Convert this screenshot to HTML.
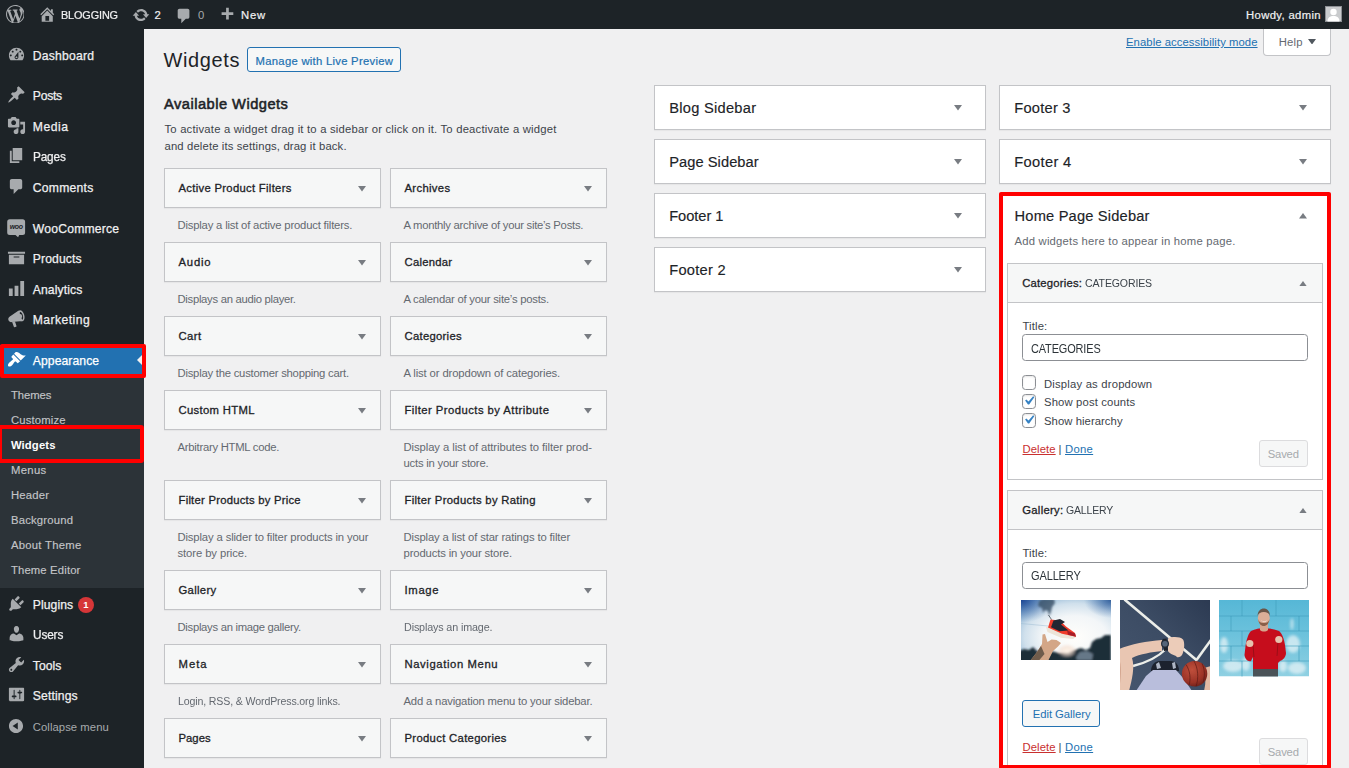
<!DOCTYPE html>
<html lang="en">
<head>
<meta charset="utf-8">
<title>Widgets ‹ BLOGGING — WordPress</title>
<style>
*{box-sizing:border-box;margin:0;padding:0}
html,body{width:1349px;height:768px;overflow:hidden;background:#f0f0f1;font-family:"Liberation Sans",sans-serif;color:#3c434a;font-size:11.7px}
body{position:relative}
.t{position:absolute;white-space:nowrap}
#bar{position:absolute;left:0;top:0;width:1349px;height:29px;background:#1d2327}
#menu{position:absolute;left:0;top:0;width:144px;height:768px;background:#1d2327}
#bar{z-index:2}
</style>
</head>
<body>
<div id="bar">
<svg style="position:absolute;left:5.8px;top:4.8px" width="18.6" height="18.6" viewBox="0 0 20 20"><path fill="#a7aaad" d="M20 10c0-5.51-4.49-10-10-10C4.48 0 0 4.49 0 10c0 5.52 4.48 10 10 10 5.51 0 10-4.48 10-10zM7.78 15.37L4.37 6.22c.55-.02 1.17-.08 1.17-.08.5-.06.44-1.13-.06-1.11 0 0-1.45.11-2.37.11-.18 0-.37 0-.58-.01C4.12 2.69 6.87 1.11 10 1.11c2.33 0 4.45.87 6.05 2.34-.68-.11-1.65.39-1.65 1.58 0 .74.45 1.36.9 2.1.35.61.55 1.36.55 2.46 0 1.49-1.4 5-1.4 5l-3.03-8.37c.54-.02.82-.17.82-.17.5-.05.44-1.25-.06-1.22 0 0-1.44.12-2.38.12-.87 0-2.33-.12-2.33-.12-.5-.03-.56 1.2-.06 1.22l.92.08 1.26 3.41zM17.41 10c.24-.64.74-1.87.43-4.25.7 1.29 1.05 2.71 1.05 4.25 0 3.29-1.73 6.24-4.4 7.78.97-2.59 1.94-5.2 2.92-7.78zM6.1 18.09C3.12 16.65 1.11 13.53 1.11 10c0-1.3.23-2.48.72-3.59C3.25 10.3 4.67 14.2 6.1 18.09zm4.03-6.63l2.58 6.98c-.86.29-1.76.45-2.71.45-.79 0-1.57-.11-2.29-.33.81-2.38 1.62-4.74 2.42-7.1z"/></svg>
<svg style="position:absolute;left:37.5px;top:4.6px" width="18.5" height="18.5" viewBox="0 0 20 20"><path fill="#a7aaad" d="M16 8.5l1.53 1.53-1.06 1.06L10 4.62l-6.47 6.47-1.06-1.06L10 2.5l4 4v-2h2v4zm-6-2.46l6 5.99V18H4v-5.97zM12 17v-5H8v5h4z"/></svg>
<div class="t" style="left:61.4px;top:8px;font-size:11.29px;line-height:15px;letter-spacing:-.15px;transform:scaleX(0.965);transform-origin:0 0;color:#f0f0f1;-webkit-text-stroke:.2px currentColor;">BLOGGING</div>
<svg style="position:absolute;left:131.5px;top:5.5px" width="18" height="18" viewBox="0 0 20 20"><path fill="#a7aaad" d="M10.2 3.28c3.53 0 6.43 2.61 6.92 6h2.08l-3.5 4-3.5-4h2.32c-.45-1.97-2.21-3.45-4.32-3.45-1.45 0-2.73.71-3.54 1.78L4.95 5.66C6.23 4.2 8.11 3.28 10.2 3.28zm-.4 13.44c-3.52 0-6.43-2.61-6.92-6H.8l3.5-4c1.17 1.33 2.33 2.67 3.5 4H5.48c.45 1.97 2.21 3.45 4.32 3.45 1.45 0 2.73-.71 3.54-1.78l1.71 1.95c-1.28 1.46-3.15 2.38-5.25 2.38z"/></svg>
<div class="t" style="left:154.6px;top:8px;font-size:11.29px;line-height:15px;color:#f0f0f1;-webkit-text-stroke:.2px currentColor;">2</div>
<svg style="position:absolute;left:174.5px;top:6.5px" width="18" height="18" viewBox="0 0 20 20"><path fill="#a7aaad" d="M5 2h9c1.1 0 2 .9 2 2v7c0 1.1-.9 2-2 2h-2l-5 5v-5H5c-1.1 0-2-.9-2-2V4c0-1.1.9-2 2-2z"/></svg>
<div class="t" style="left:198px;top:8px;font-size:11.29px;line-height:15px;color:#a7aaad;">0</div>
<svg style="position:absolute;left:218px;top:6px" width="18" height="18" viewBox="0 0 20 20"><path fill="#a7aaad" d="M17 7v3h-5v5H9v-5H4V7h5V2h3v5h5z"/></svg>
<div class="t" style="left:241px;top:8px;font-size:11.29px;line-height:15px;letter-spacing:0.79px;color:#f0f0f1;-webkit-text-stroke:.2px currentColor;">New</div>
<div class="t" style="left:1246px;top:8px;font-size:11.29px;line-height:15px;letter-spacing:0.36px;color:#f0f0f1;-webkit-text-stroke:.2px currentColor;">Howdy, admin</div>
<svg style="position:absolute;left:1325px;top:6px" width="17" height="16" viewBox="0 0 17 16"><rect width="17" height="16" fill="#c9cbcd"/><rect x=".5" y=".5" width="16" height="15" fill="none" stroke="#8c8f94"/><circle cx="8.5" cy="6" r="3.2" fill="#fff"/><path d="M2.5 15.500c0-4 2.500-5.500 6-5.500s6 1.500 6 5.500z" fill="#fff"/></svg>
</div>
<div id="menu">
<div style="position:absolute;left:0px;top:375.3px;width:144px;height:212.7px;background:#2c3338"></div>
<div style="position:absolute;left:0px;top:344.7px;width:144px;height:30.6px;background:#2271b1"></div>
<svg style="position:absolute;left:137px;top:353px" width="7" height="14" viewBox="0 0 7 14"><path d="M7 0v14L0 7z" fill="#f0f0f1"/></svg>
<svg style="position:absolute;left:6.7px;top:45.2px" width="19" height="19" viewBox="0 0 20 20"><path fill="#a7aaad" d="M3.76 16h12.48c1.1-1.37 1.76-3.11 1.76-5 0-4.42-3.58-8-8-8s-8 3.58-8 8c0 1.89.66 3.63 1.76 5zM10 4c.55 0 1 .45 1 1s-.45 1-1 1-1-.45-1-1 .45-1 1-1zM6 6c.55 0 1 .45 1 1s-.45 1-1 1-1-.45-1-1 .45-1 1-1zm8 0c.55 0 1 .45 1 1s-.45 1-1 1-1-.45-1-1 .45-1 1-1zm-5.37 5.55L12 7v6c0 1.1-.9 2-2 2s-2-.9-2-2c0-.57.24-1.08.63-1.45zM4 10c.55 0 1 .45 1 1s-.45 1-1 1-1-.45-1-1 .45-1 1-1zm12 0c.55 0 1 .45 1 1s-.45 1-1 1-1-.45-1-1 .45-1 1-1zm-5 3c0-.55-.45-1-1-1s-1 .45-1 1 .45 1 1 1 1-.45 1-1z"/></svg>
<div class="t" style="left:32.8px;top:48px;font-size:12.16px;line-height:16px;letter-spacing:0.21px;color:#f0f0f1;-webkit-text-stroke:.25px currentColor;">Dashboard</div>
<svg style="position:absolute;left:6.7px;top:85.2px" width="19" height="19" viewBox="0 0 20 20"><path fill="#a7aaad" d="M10.44 3.02l1.82-1.82 6.36 6.35-1.83 1.82c-1.05-.68-2.48-.57-3.41.36l-.75.75c-.92.93-1.04 2.35-.35 3.41l-1.83 1.82-2.41-2.41-2.8 2.79c-.42.42-3.38 2.71-3.8 2.29s1.86-3.39 2.28-3.81l2.79-2.79L4.1 9.36l1.83-1.82c1.05.69 2.48.57 3.4-.36l.75-.75c.93-.92 1.05-2.35.36-3.41z"/></svg>
<div class="t" style="left:32.8px;top:88px;font-size:12.16px;line-height:16px;letter-spacing:-0.27px;color:#f0f0f1;-webkit-text-stroke:.25px currentColor;">Posts</div>
<svg style="position:absolute;left:6.7px;top:116.2px" width="19" height="19" viewBox="0 0 20 20"><path fill="#a7aaad" d="M13 11V4c0-.55-.45-1-1-1h-1.670L9 1H5L3.670 3H2c-.55 0-1 .45-1 1v7c0 .55.45 1 1 1h10c.55 0 1-.45 1-1zM7 4.5c1.38 0 2.5 1.12 2.5 2.5S8.380 9.5 7 9.5 4.5 8.380 4.5 7 5.620 4.5 7 4.5zM14 6h5v10.500c0 1.38-1.120 2.500-2.500 2.500S14 17.880 14 16.500s1.120-2.500 2.500-2.500c.17 0 .34.02.5.050V9h-3V6zm-4 8.050V13h2v3.500c0 1.38-1.120 2.500-2.500 2.500S7 17.880 7 16.500 8.120 14 9.500 14c.17 0 .34.020.5.050z"/></svg>
<div class="t" style="left:32.8px;top:119px;font-size:12.16px;line-height:16px;letter-spacing:0.51px;color:#f0f0f1;-webkit-text-stroke:.25px currentColor;">Media</div>
<svg style="position:absolute;left:6.7px;top:146.2px" width="19" height="19" viewBox="0 0 20 20"><path fill="#a7aaad" d="M6 15V2h10v13H6zm-1 1h8v2H3V5h2v11z"/></svg>
<div class="t" style="left:32.8px;top:149px;font-size:12.16px;line-height:16px;letter-spacing:-.15px;transform:scaleX(0.969);transform-origin:0 0;color:#f0f0f1;-webkit-text-stroke:.25px currentColor;">Pages</div>
<svg style="position:absolute;left:6.7px;top:177.2px" width="19" height="19" viewBox="0 0 20 20"><path fill="#a7aaad" d="M5 2h9c1.1 0 2 .9 2 2v7c0 1.1-.9 2-2 2h-2l-5 5v-5H5c-1.1 0-2-.9-2-2V4c0-1.1.9-2 2-2z"/></svg>
<div class="t" style="left:32.8px;top:180px;font-size:12.16px;line-height:16px;letter-spacing:0.24px;color:#f0f0f1;-webkit-text-stroke:.25px currentColor;">Comments</div>
<svg style="position:absolute;left:7px;top:218.5px" width="19" height="19" viewBox="0 0 19 19"><path d="M2.700.200h12.900a2.500 2.500 0 0 1 2.500 2.500v10.700a2.500 2.500 0 0 1-2.500 2.500h-3.400l-1.100 2.400-2.600-2.400H2.700a2.500 2.500 0 0 1-2.500-2.500V2.700A2.500 2.500 0 0 1 2.700.2z" fill="#a7aaad"/><text x="9.200" y="10.400" font-size="7" font-weight="700" font-style="italic" text-anchor="middle" fill="#1d2327" font-family="Liberation Sans,sans-serif" letter-spacing="-.4">woo</text></svg>
<div class="t" style="left:32.8px;top:221px;font-size:12.16px;line-height:16px;letter-spacing:0.21px;color:#f0f0f1;-webkit-text-stroke:.25px currentColor;">WooCommerce</div>
<svg style="position:absolute;left:6.7px;top:248.2px" width="19" height="19" viewBox="0 0 20 20"><path fill="#a7aaad" d="M19 4v2H1V4h18zM2 7h16v10H2V7zm11 3V9H7v1h6z"/></svg>
<div class="t" style="left:32.8px;top:251px;font-size:12.16px;line-height:16px;letter-spacing:0.11px;color:#f0f0f1;-webkit-text-stroke:.25px currentColor;">Products</div>
<svg style="position:absolute;left:6.7px;top:279.2px" width="19" height="19" viewBox="0 0 20 20"><path fill="#a7aaad" d="M18 18V2h-4v16h4zm-6 0V7H8v11h4zm-6 0v-8H2v8h4z"/></svg>
<div class="t" style="left:32.8px;top:282px;font-size:12.16px;line-height:16px;letter-spacing:0.1px;color:#f0f0f1;-webkit-text-stroke:.25px currentColor;">Analytics</div>
<svg style="position:absolute;left:7px;top:309.2px" width="19" height="19" viewBox="0 0 20 20"><g fill="#a7aaad"><path d="M12.300 1.700L3 7.800c-1.300.800-2 2.300-1.500 3.800.5 1.600 2 2.400 3.500 2.200l11.400-1.300z"/><path d="M5.300 13.300l3-.5 1.700 5.200c.1.400-.1.700-.5.800l-1.500.4c-.4.100-.700-.1-.8-.5z"/><path fill-rule="evenodd" d="M13.100 1.500c1.900-.6 4.100 1.500 5 4.600.9 3.200.2 6.200-1.700 6.800-1.900.6-4.100-1.500-5-4.600-.9-3.200-.2-6.200 1.700-6.800zm.6 1.800c-1 .3-1.300 2.300-.7 4.500.6 2.200 2 3.800 3 3.500 1-.3 1.300-2.300.7-4.500-.6-2.200-2-3.800-3-3.500zm.5 2c.6-.2 1.300.6 1.600 1.700.3 1.100.1 2.100-.5 2.300-.6.2-1.300-.6-1.600-1.700-.3-1.100-.1-2.100.5-2.300z"/></g></svg>
<div class="t" style="left:32.8px;top:312px;font-size:12.16px;line-height:16px;letter-spacing:0.44px;color:#f0f0f1;-webkit-text-stroke:.25px currentColor;">Marketing</div>
<svg style="position:absolute;left:6.7px;top:350.2px" width="19" height="19" viewBox="0 0 20 20"><path fill="#fff" d="M14.48 11.06L7.41 3.99l1.5-1.5c.5-.56 2.3-.47 3.51.32 1.21.8 1.43 1.28 2.91 2.1 1.18.64 2.45 1.26 4.45.85zm-.71.71L6.7 4.7 4.93 6.47c-.39.39-.39 1.02 0 1.41l1.060 1.060c.39.39.39 1.030 0 1.420-.6.6-1.430 1.110-2.210 1.690-.35.26-.7.530-1.010.84C1.430 14.230.4 16.080 1.4 17.070c.99 1 2.840-.030 4.180-1.360.31-.31.580-.66.850-1.020.57-.78 1.080-1.610 1.690-2.210.39-.39 1.020-.39 1.410 0l1.060 1.060c.39.39 1.020.39 1.410 0z"/></svg>
<div class="t" style="left:32.8px;top:353px;font-size:12.16px;line-height:16px;letter-spacing:0.08px;color:#fff;-webkit-text-stroke:.25px currentColor;">Appearance</div>
<svg style="position:absolute;left:6.7px;top:594.2px" width="19" height="19" viewBox="0 0 20 20"><path fill="#a7aaad" d="M13.11 4.36L9.87 7.6 8 5.73l3.240-3.240c.35-.34 1.050-.2 1.560.32.52.51.66 1.210.31 1.550zm-8 1.770l.91-1.120 9.010 9.010-1.190.84c-.71.71-2.630 1.160-3.820 1.160H6.140L4.900 17.260c-.59.59-1.540.59-2.120 0-.59-.58-.59-1.530 0-2.120l1.240-1.240v-3.880c0-1.130.4-3.190 1.090-3.890zm7.260 3.970l3.240-3.240c.34-.35 1.040-.21 1.550.31.52.51.66 1.210.31 1.550l-3.240 3.250z"/></svg>
<div class="t" style="left:32.8px;top:597px;font-size:12.16px;line-height:16px;letter-spacing:0.08px;color:#f0f0f1;-webkit-text-stroke:.25px currentColor;">Plugins</div>
<svg style="position:absolute;left:6.7px;top:624.2px" width="19" height="19" viewBox="0 0 20 20"><path fill="#a7aaad" d="M10 9.25c-2.27 0-2.73-3.440-2.730-3.440C7 4.020 7.820 2 9.970 2c2.160 0 2.980 2.020 2.710 3.810 0 0-.41 3.440-2.680 3.440zm0 2.570L12.720 10c2.390 0 4.520 2.330 4.520 4.530v2.490s-3.650 1.130-7.240 1.130c-3.650 0-7.240-1.130-7.240-1.130v-2.490c0-2.250 1.940-4.480 4.470-4.480z"/></svg>
<div class="t" style="left:32.8px;top:627px;font-size:12.16px;line-height:16px;letter-spacing:-.15px;transform:scaleX(0.973);transform-origin:0 0;color:#f0f0f1;-webkit-text-stroke:.25px currentColor;">Users</div>
<svg style="position:absolute;left:6.7px;top:655.2px" width="19" height="19" viewBox="0 0 20 20"><path fill="#a7aaad" d="M16.68 9.77c-1.34 1.34-3.3 1.67-4.95.99l-5.410 6.520c-.99.99-2.590.99-3.580 0s-.99-2.590 0-3.570l6.520-5.420c-.68-1.650-.35-3.610.99-4.950 1.280-1.280 3.120-1.620 4.720-1.060l-2.890 2.890 2.820 2.820 2.860-2.870c.53 1.580.18 3.390-1.080 4.650zM3.810 16.210c.4.39 1.040.39 1.430 0 .4-.4.4-1.040 0-1.430-.39-.4-1.030-.4-1.430 0-.39.39-.39 1.030 0 1.430z"/></svg>
<div class="t" style="left:32.8px;top:658px;font-size:12.16px;line-height:16px;letter-spacing:0.04px;color:#f0f0f1;-webkit-text-stroke:.25px currentColor;">Tools</div>
<svg style="position:absolute;left:6.7px;top:685.2px" width="19" height="19" viewBox="0 0 20 20"><path fill="#a7aaad" d="M18 16V4c0-.55-.45-1-1-1H3c-.55 0-1 .45-1 1v12c0 .55.45 1 1 1h14c.55 0 1-.45 1-1zM8 11h1c.55 0 1 .45 1 1s-.45 1-1 1H8v1.500c0 .28-.22.5-.5.5s-.5-.22-.5-.5V13H6c-.55 0-1-.45-1-1s.45-1 1-1h1V5.500c0-.28.220-.5.5-.5s.5.220.5.5V11zm5-2h-1c-.55 0-1-.45-1-1s.45-1 1-1h1V5.500c0-.28.220-.5.5-.5s.5.220.5.5V7h1c.55 0 1 .45 1 1s-.45 1-1 1h-1v5.500c0 .28-.22.5-.5.5s-.5-.22-.5-.5V9z"/></svg>
<div class="t" style="left:32.8px;top:688px;font-size:12.16px;line-height:16px;letter-spacing:0.13px;color:#f0f0f1;-webkit-text-stroke:.25px currentColor;">Settings</div>
<div class="t" style="left:10.9px;top:388px;font-size:11.29px;line-height:15px;letter-spacing:-0.06px;color:#c3c4c7;-webkit-text-stroke:.15px currentColor;">Themes</div>
<div class="t" style="left:10.9px;top:413px;font-size:11.29px;line-height:15px;letter-spacing:0.17px;color:#c3c4c7;-webkit-text-stroke:.15px currentColor;">Customize</div>
<div class="t" style="left:10.9px;top:438px;font-size:11.29px;line-height:15px;letter-spacing:0.13px;color:#fff;font-weight:700;">Widgets</div>
<div class="t" style="left:10.9px;top:463px;font-size:11.29px;line-height:15px;letter-spacing:0.37px;color:#c3c4c7;-webkit-text-stroke:.15px currentColor;">Menus</div>
<div class="t" style="left:10.9px;top:488px;font-size:11.29px;line-height:15px;letter-spacing:0.23px;color:#c3c4c7;-webkit-text-stroke:.15px currentColor;">Header</div>
<div class="t" style="left:10.9px;top:513px;font-size:11.29px;line-height:15px;letter-spacing:0.22px;color:#c3c4c7;-webkit-text-stroke:.15px currentColor;">Background</div>
<div class="t" style="left:10.9px;top:538px;font-size:11.29px;line-height:15px;letter-spacing:0.28px;color:#c3c4c7;-webkit-text-stroke:.15px currentColor;">About Theme</div>
<div class="t" style="left:10.9px;top:563px;font-size:11.29px;line-height:15px;letter-spacing:0.16px;color:#c3c4c7;-webkit-text-stroke:.15px currentColor;">Theme Editor</div>
<div style="position:absolute;left:78px;top:597px;width:16px;height:16px;background:#d63638;border-radius:8px;color:#fff;font-size:9.5px;font-weight:700;text-align:center;line-height:16px">1</div>
<svg style="position:absolute;left:7px;top:717px" width="18" height="18" viewBox="0 0 20 20"><path fill="#a7aaad" d="M10 2.16c4.33 0 7.840 3.510 7.840 7.840s-3.510 7.840-7.840 7.840S2.160 14.330 2.160 10 5.670 2.160 10 2.160zm2 11.720V6.120L6.180 9.970z"/></svg>
<div class="t" style="left:32.8px;top:720px;font-size:11.29px;line-height:15px;letter-spacing:0.06px;color:#a7aaad;">Collapse menu</div>
</div>
<div style="position:absolute;left:0px;top:344px;width:146px;height:34px;border:4px solid #ff0000;border-radius:2px;z-index:9"></div>
<div style="position:absolute;left:-2px;top:425px;width:146px;height:38px;border:4px solid #ff0000;border-radius:3px;z-index:9"></div>
<a class="t" style="left:1126px;top:35px;font-size:11.29px;line-height:15px;letter-spacing:0.07px;color:#2271b1;text-decoration:underline;">Enable accessibility mode</a>
<div style="position:absolute;left:1263px;top:28px;width:68px;height:27.5px;background:#fff;border:1px solid #c3c4c7;border-top:none;border-radius:0 0 4px 4px"></div>
<div class="t" style="left:1278.7px;top:35px;font-size:11.29px;line-height:15px;letter-spacing:0.22px;color:#646970;">Help</div>
<svg style="position:absolute;left:1307.5px;top:38.7px" width="8" height="5.5" viewBox="0 0 10 6" preserveAspectRatio="none"><path d="M0 0h10L5 6z" fill="#50575e"/></svg>
<h1 class="t" style="left:163.5px;top:47px;font-size:19.98px;line-height:26px;letter-spacing:0.64px;color:#1d2327;font-weight:400;">Widgets</h1>
<div style="position:absolute;left:247px;top:47px;width:154px;height:25px;background:#f6f7f7;border:1px solid #2271b1;border-radius:3px"></div>
<a class="t" style="left:255.6px;top:54px;font-size:11.29px;line-height:15px;letter-spacing:0.27px;color:#2271b1;-webkit-text-stroke:.2px #2271b1;">Manage with Live Preview</a>
<h2 class="t" style="left:164px;top:95px;font-size:14.67px;line-height:19px;letter-spacing:0.48px;color:#1d2327;font-weight:400;-webkit-text-stroke:.55px #1d2327;">Available Widgets</h2>
<p class="t" style="left:164.5px;top:122px;font-size:11.29px;line-height:15px;letter-spacing:0.2px;color:#3c434a;">To activate a widget drag it to a sidebar or click on it. To deactivate a widget</p>
<p class="t" style="left:164.5px;top:139px;font-size:11.29px;line-height:15px;letter-spacing:0.14px;color:#3c434a;">and delete its settings, drag it back.</p>
<div style="position:absolute;left:164px;top:168.3px;width:217px;height:40px;background:#f6f7f7;border:1px solid #c3c4c7;box-shadow:0 1px 1px rgba(0,0,0,.04)"></div>
<h3 class="t" style="left:178.5px;top:181px;font-size:11.29px;line-height:15px;letter-spacing:0.3px;color:#1d2327;-webkit-text-stroke:.3px #1d2327;font-weight:400;">Active Product Filters</h3>
<svg style="position:absolute;left:357.5px;top:186px" width="8" height="5.5" viewBox="0 0 10 6" preserveAspectRatio="none"><path d="M0 0h10L5 6z" fill="#787c82"/></svg>
<p class="t" style="left:177.5px;top:218px;font-size:11.29px;line-height:15px;letter-spacing:-0.19px;color:#646970;">Display a list of active product filters.</p>
<div style="position:absolute;left:390px;top:168.3px;width:217px;height:40px;background:#f6f7f7;border:1px solid #c3c4c7;box-shadow:0 1px 1px rgba(0,0,0,.04)"></div>
<h3 class="t" style="left:404.5px;top:181px;font-size:11.29px;line-height:15px;letter-spacing:0.33px;color:#1d2327;-webkit-text-stroke:.3px #1d2327;font-weight:400;">Archives</h3>
<svg style="position:absolute;left:583.5px;top:186px" width="8" height="5.5" viewBox="0 0 10 6" preserveAspectRatio="none"><path d="M0 0h10L5 6z" fill="#787c82"/></svg>
<p class="t" style="left:403.5px;top:218px;font-size:11.29px;line-height:15px;letter-spacing:-0.26px;color:#646970;">A monthly archive of your site’s Posts.</p>
<div style="position:absolute;left:164px;top:242.3px;width:217px;height:40px;background:#f6f7f7;border:1px solid #c3c4c7;box-shadow:0 1px 1px rgba(0,0,0,.04)"></div>
<h3 class="t" style="left:178.5px;top:255px;font-size:11.29px;line-height:15px;letter-spacing:0.8px;color:#1d2327;-webkit-text-stroke:.3px #1d2327;font-weight:400;">Audio</h3>
<svg style="position:absolute;left:357.5px;top:260px" width="8" height="5.5" viewBox="0 0 10 6" preserveAspectRatio="none"><path d="M0 0h10L5 6z" fill="#787c82"/></svg>
<p class="t" style="left:177.5px;top:292px;font-size:11.29px;line-height:15px;letter-spacing:-0.29px;color:#646970;">Displays an audio player.</p>
<div style="position:absolute;left:390px;top:242.3px;width:217px;height:40px;background:#f6f7f7;border:1px solid #c3c4c7;box-shadow:0 1px 1px rgba(0,0,0,.04)"></div>
<h3 class="t" style="left:404.5px;top:255px;font-size:11.29px;line-height:15px;letter-spacing:0.25px;color:#1d2327;-webkit-text-stroke:.3px #1d2327;font-weight:400;">Calendar</h3>
<svg style="position:absolute;left:583.5px;top:260px" width="8" height="5.5" viewBox="0 0 10 6" preserveAspectRatio="none"><path d="M0 0h10L5 6z" fill="#787c82"/></svg>
<p class="t" style="left:403.5px;top:292px;font-size:11.29px;line-height:15px;letter-spacing:-0.23px;color:#646970;">A calendar of your site’s posts.</p>
<div style="position:absolute;left:164px;top:316.3px;width:217px;height:40px;background:#f6f7f7;border:1px solid #c3c4c7;box-shadow:0 1px 1px rgba(0,0,0,.04)"></div>
<h3 class="t" style="left:178.5px;top:329px;font-size:11.29px;line-height:15px;letter-spacing:0.42px;color:#1d2327;-webkit-text-stroke:.3px #1d2327;font-weight:400;">Cart</h3>
<svg style="position:absolute;left:357.5px;top:334px" width="8" height="5.5" viewBox="0 0 10 6" preserveAspectRatio="none"><path d="M0 0h10L5 6z" fill="#787c82"/></svg>
<p class="t" style="left:177.5px;top:366px;font-size:11.29px;line-height:15px;letter-spacing:-0.23px;color:#646970;">Display the customer shopping cart.</p>
<div style="position:absolute;left:390px;top:316.3px;width:217px;height:40px;background:#f6f7f7;border:1px solid #c3c4c7;box-shadow:0 1px 1px rgba(0,0,0,.04)"></div>
<h3 class="t" style="left:404.5px;top:329px;font-size:11.29px;line-height:15px;letter-spacing:0.28px;color:#1d2327;-webkit-text-stroke:.3px #1d2327;font-weight:400;">Categories</h3>
<svg style="position:absolute;left:583.5px;top:334px" width="8" height="5.5" viewBox="0 0 10 6" preserveAspectRatio="none"><path d="M0 0h10L5 6z" fill="#787c82"/></svg>
<p class="t" style="left:403.5px;top:366px;font-size:11.29px;line-height:15px;letter-spacing:-0.12px;color:#646970;">A list or dropdown of categories.</p>
<div style="position:absolute;left:164px;top:390.3px;width:217px;height:40px;background:#f6f7f7;border:1px solid #c3c4c7;box-shadow:0 1px 1px rgba(0,0,0,.04)"></div>
<h3 class="t" style="left:178.5px;top:403px;font-size:11.29px;line-height:15px;letter-spacing:0.33px;color:#1d2327;-webkit-text-stroke:.3px #1d2327;font-weight:400;">Custom HTML</h3>
<svg style="position:absolute;left:357.5px;top:408px" width="8" height="5.5" viewBox="0 0 10 6" preserveAspectRatio="none"><path d="M0 0h10L5 6z" fill="#787c82"/></svg>
<p class="t" style="left:177.5px;top:440px;font-size:11.29px;line-height:15px;letter-spacing:-0.26px;color:#646970;">Arbitrary HTML code.</p>
<div style="position:absolute;left:390px;top:390.3px;width:217px;height:40px;background:#f6f7f7;border:1px solid #c3c4c7;box-shadow:0 1px 1px rgba(0,0,0,.04)"></div>
<h3 class="t" style="left:404.5px;top:403px;font-size:11.29px;line-height:15px;letter-spacing:0.45px;color:#1d2327;-webkit-text-stroke:.3px #1d2327;font-weight:400;">Filter Products by Attribute</h3>
<svg style="position:absolute;left:583.5px;top:408px" width="8" height="5.5" viewBox="0 0 10 6" preserveAspectRatio="none"><path d="M0 0h10L5 6z" fill="#787c82"/></svg>
<p class="t" style="left:403.5px;top:440px;font-size:11.29px;line-height:15px;letter-spacing:-0.08px;color:#646970;">Display a list of attributes to filter prod-</p>
<p class="t" style="left:403.5px;top:456px;font-size:11.29px;line-height:15px;letter-spacing:-0.22px;color:#646970;">ucts in your store.</p>
<div style="position:absolute;left:164px;top:480.3px;width:217px;height:40px;background:#f6f7f7;border:1px solid #c3c4c7;box-shadow:0 1px 1px rgba(0,0,0,.04)"></div>
<h3 class="t" style="left:178.5px;top:493px;font-size:11.29px;line-height:15px;letter-spacing:0.24px;color:#1d2327;-webkit-text-stroke:.3px #1d2327;font-weight:400;">Filter Products by Price</h3>
<svg style="position:absolute;left:357.5px;top:498px" width="8" height="5.5" viewBox="0 0 10 6" preserveAspectRatio="none"><path d="M0 0h10L5 6z" fill="#787c82"/></svg>
<p class="t" style="left:177.5px;top:530px;font-size:11.29px;line-height:15px;letter-spacing:-0.14px;color:#646970;">Display a slider to filter products in your</p>
<p class="t" style="left:177.5px;top:546px;font-size:11.29px;line-height:15px;letter-spacing:-0.09px;color:#646970;">store by price.</p>
<div style="position:absolute;left:390px;top:480.3px;width:217px;height:40px;background:#f6f7f7;border:1px solid #c3c4c7;box-shadow:0 1px 1px rgba(0,0,0,.04)"></div>
<h3 class="t" style="left:404.5px;top:493px;font-size:11.29px;line-height:15px;letter-spacing:0.31px;color:#1d2327;-webkit-text-stroke:.3px #1d2327;font-weight:400;">Filter Products by Rating</h3>
<svg style="position:absolute;left:583.5px;top:498px" width="8" height="5.5" viewBox="0 0 10 6" preserveAspectRatio="none"><path d="M0 0h10L5 6z" fill="#787c82"/></svg>
<p class="t" style="left:403.5px;top:530px;font-size:11.29px;line-height:15px;letter-spacing:-0.13px;color:#646970;">Display a list of star ratings to filter</p>
<p class="t" style="left:403.5px;top:546px;font-size:11.29px;line-height:15px;letter-spacing:-0.14px;color:#646970;">products in your store.</p>
<div style="position:absolute;left:164px;top:570.3px;width:217px;height:40px;background:#f6f7f7;border:1px solid #c3c4c7;box-shadow:0 1px 1px rgba(0,0,0,.04)"></div>
<h3 class="t" style="left:178.5px;top:583px;font-size:11.29px;line-height:15px;letter-spacing:0.31px;color:#1d2327;-webkit-text-stroke:.3px #1d2327;font-weight:400;">Gallery</h3>
<svg style="position:absolute;left:357.5px;top:588px" width="8" height="5.5" viewBox="0 0 10 6" preserveAspectRatio="none"><path d="M0 0h10L5 6z" fill="#787c82"/></svg>
<p class="t" style="left:177.5px;top:620px;font-size:11.29px;line-height:15px;letter-spacing:-0.29px;color:#646970;">Displays an image gallery.</p>
<div style="position:absolute;left:390px;top:570.3px;width:217px;height:40px;background:#f6f7f7;border:1px solid #c3c4c7;box-shadow:0 1px 1px rgba(0,0,0,.04)"></div>
<h3 class="t" style="left:404.5px;top:583px;font-size:11.29px;line-height:15px;letter-spacing:0.68px;color:#1d2327;-webkit-text-stroke:.3px #1d2327;font-weight:400;">Image</h3>
<svg style="position:absolute;left:583.5px;top:588px" width="8" height="5.5" viewBox="0 0 10 6" preserveAspectRatio="none"><path d="M0 0h10L5 6z" fill="#787c82"/></svg>
<p class="t" style="left:403.5px;top:620px;font-size:11.29px;line-height:15px;letter-spacing:-.15px;transform:scaleX(0.954);transform-origin:0 0;color:#646970;">Displays an image.</p>
<div style="position:absolute;left:164px;top:644.3px;width:217px;height:40px;background:#f6f7f7;border:1px solid #c3c4c7;box-shadow:0 1px 1px rgba(0,0,0,.04)"></div>
<h3 class="t" style="left:178.5px;top:657px;font-size:11.29px;line-height:15px;letter-spacing:0.99px;color:#1d2327;-webkit-text-stroke:.3px #1d2327;font-weight:400;">Meta</h3>
<svg style="position:absolute;left:357.5px;top:662px" width="8" height="5.5" viewBox="0 0 10 6" preserveAspectRatio="none"><path d="M0 0h10L5 6z" fill="#787c82"/></svg>
<p class="t" style="left:177.5px;top:694px;font-size:11.29px;line-height:15px;letter-spacing:-.15px;transform:scaleX(0.94);transform-origin:0 0;color:#646970;">Login, RSS, &amp; WordPress.org links.</p>
<div style="position:absolute;left:390px;top:644.3px;width:217px;height:40px;background:#f6f7f7;border:1px solid #c3c4c7;box-shadow:0 1px 1px rgba(0,0,0,.04)"></div>
<h3 class="t" style="left:404.5px;top:657px;font-size:11.29px;line-height:15px;letter-spacing:0.6px;color:#1d2327;-webkit-text-stroke:.3px #1d2327;font-weight:400;">Navigation Menu</h3>
<svg style="position:absolute;left:583.5px;top:662px" width="8" height="5.5" viewBox="0 0 10 6" preserveAspectRatio="none"><path d="M0 0h10L5 6z" fill="#787c82"/></svg>
<p class="t" style="left:403.5px;top:694px;font-size:11.29px;line-height:15px;letter-spacing:-0.18px;color:#646970;">Add a navigation menu to your sidebar.</p>
<div style="position:absolute;left:164px;top:718.3px;width:217px;height:40px;background:#f6f7f7;border:1px solid #c3c4c7;box-shadow:0 1px 1px rgba(0,0,0,.04)"></div>
<h3 class="t" style="left:178.5px;top:731px;font-size:11.29px;line-height:15px;letter-spacing:0.02px;color:#1d2327;-webkit-text-stroke:.3px #1d2327;font-weight:400;">Pages</h3>
<svg style="position:absolute;left:357.5px;top:736px" width="8" height="5.5" viewBox="0 0 10 6" preserveAspectRatio="none"><path d="M0 0h10L5 6z" fill="#787c82"/></svg>
<div style="position:absolute;left:390px;top:718.3px;width:217px;height:40px;background:#f6f7f7;border:1px solid #c3c4c7;box-shadow:0 1px 1px rgba(0,0,0,.04)"></div>
<h3 class="t" style="left:404.5px;top:731px;font-size:11.29px;line-height:15px;letter-spacing:0.32px;color:#1d2327;-webkit-text-stroke:.3px #1d2327;font-weight:400;">Product Categories</h3>
<svg style="position:absolute;left:583.5px;top:736px" width="8" height="5.5" viewBox="0 0 10 6" preserveAspectRatio="none"><path d="M0 0h10L5 6z" fill="#787c82"/></svg>
<div style="position:absolute;left:654px;top:85px;width:332px;height:45px;background:#fff;border:1px solid #c3c4c7;box-shadow:0 1px 1px rgba(0,0,0,.04)"></div>
<h2 class="t" style="left:669.2px;top:99px;font-size:14.67px;line-height:19px;letter-spacing:0.27px;color:#1d2327;font-weight:400;-webkit-text-stroke:.15px #1d2327;">Blog Sidebar</h2>
<svg style="position:absolute;left:954px;top:105px" width="8" height="5.5" viewBox="0 0 10 6" preserveAspectRatio="none"><path d="M0 0h10L5 6z" fill="#787c82"/></svg>
<div style="position:absolute;left:654px;top:139px;width:332px;height:45px;background:#fff;border:1px solid #c3c4c7;box-shadow:0 1px 1px rgba(0,0,0,.04)"></div>
<h2 class="t" style="left:669.2px;top:153px;font-size:14.67px;line-height:19px;letter-spacing:0.06px;color:#1d2327;font-weight:400;-webkit-text-stroke:.15px #1d2327;">Page Sidebar</h2>
<svg style="position:absolute;left:954px;top:159px" width="8" height="5.5" viewBox="0 0 10 6" preserveAspectRatio="none"><path d="M0 0h10L5 6z" fill="#787c82"/></svg>
<div style="position:absolute;left:654px;top:193px;width:332px;height:45px;background:#fff;border:1px solid #c3c4c7;box-shadow:0 1px 1px rgba(0,0,0,.04)"></div>
<h2 class="t" style="left:669.2px;top:207px;font-size:14.67px;line-height:19px;letter-spacing:-0.04px;color:#1d2327;font-weight:400;-webkit-text-stroke:.15px #1d2327;">Footer 1</h2>
<svg style="position:absolute;left:954px;top:213px" width="8" height="5.5" viewBox="0 0 10 6" preserveAspectRatio="none"><path d="M0 0h10L5 6z" fill="#787c82"/></svg>
<div style="position:absolute;left:654px;top:247px;width:332px;height:45px;background:#fff;border:1px solid #c3c4c7;box-shadow:0 1px 1px rgba(0,0,0,.04)"></div>
<h2 class="t" style="left:669.2px;top:261px;font-size:14.67px;line-height:19px;letter-spacing:0.26px;color:#1d2327;font-weight:400;-webkit-text-stroke:.15px #1d2327;">Footer 2</h2>
<svg style="position:absolute;left:954px;top:267px" width="8" height="5.5" viewBox="0 0 10 6" preserveAspectRatio="none"><path d="M0 0h10L5 6z" fill="#787c82"/></svg>
<div style="position:absolute;left:999px;top:85px;width:332px;height:45px;background:#fff;border:1px solid #c3c4c7;box-shadow:0 1px 1px rgba(0,0,0,.04)"></div>
<h2 class="t" style="left:1014.2px;top:99px;font-size:14.67px;line-height:19px;letter-spacing:0.25px;color:#1d2327;font-weight:400;-webkit-text-stroke:.15px #1d2327;">Footer 3</h2>
<svg style="position:absolute;left:1299px;top:105px" width="8" height="5.5" viewBox="0 0 10 6" preserveAspectRatio="none"><path d="M0 0h10L5 6z" fill="#787c82"/></svg>
<div style="position:absolute;left:999px;top:139px;width:332px;height:45px;background:#fff;border:1px solid #c3c4c7;box-shadow:0 1px 1px rgba(0,0,0,.04)"></div>
<h2 class="t" style="left:1014.2px;top:153px;font-size:14.67px;line-height:19px;letter-spacing:0.35px;color:#1d2327;font-weight:400;-webkit-text-stroke:.15px #1d2327;">Footer 4</h2>
<svg style="position:absolute;left:1299px;top:159px" width="8" height="5.5" viewBox="0 0 10 6" preserveAspectRatio="none"><path d="M0 0h10L5 6z" fill="#787c82"/></svg>
<div style="position:absolute;left:999px;top:193px;width:332px;height:600px;background:#fff;border:1px solid #c3c4c7"></div>
<h2 class="t" style="left:1014.6px;top:207px;font-size:14.67px;line-height:19px;letter-spacing:0.18px;color:#1d2327;font-weight:400;-webkit-text-stroke:.15px #1d2327;">Home Page Sidebar</h2>
<svg style="position:absolute;left:1299px;top:213px" width="8" height="5.5" viewBox="0 0 10 6" preserveAspectRatio="none"><path d="M0 6h10L5 0z" fill="#787c82"/></svg>
<p class="t" style="left:1014.5px;top:234px;font-size:11.29px;line-height:15px;letter-spacing:0.21px;color:#646970;">Add widgets here to appear in home page.</p>
<div style="position:absolute;left:1007px;top:263px;width:316px;height:40px;background:#f6f7f7;border:1px solid #c3c4c7;box-shadow:0 1px 1px rgba(0,0,0,.04)"></div>
<h3 class="t" style="left:1022.2px;top:276px;font-size:11.29px;line-height:15px;letter-spacing:0.21px;color:#1d2327;-webkit-text-stroke:.3px #1d2327;font-weight:400;">Categories:</h3>
<div class="t" style="left:1084.6px;top:276px;font-size:11.29px;line-height:15px;letter-spacing:-.15px;transform:scaleX(0.935);transform-origin:0 0;color:#3c434a;">CATEGORIES</div>
<svg style="position:absolute;left:1299px;top:280.5px" width="8" height="5.5" viewBox="0 0 10 6" preserveAspectRatio="none"><path d="M0 6h10L5 0z" fill="#787c82"/></svg>
<div style="position:absolute;left:1007px;top:303px;width:316px;height:177px;background:#fff;border:1px solid #c3c4c7;border-top:none"></div>
<div class="t" style="left:1022.5px;top:319px;font-size:11.29px;line-height:15px;letter-spacing:0.13px;color:#3c434a;">Title:</div>
<div style="position:absolute;left:1022px;top:334px;width:286px;height:26.5px;background:#fff;border:1px solid #8c8f94;border-radius:3.500px"></div>
<div class="t" style="left:1030.8px;top:341px;font-size:12.16px;line-height:16px;letter-spacing:-.15px;transform:scaleX(0.9);transform-origin:0 0;color:#2c3338;">CATEGORIES</div>
<div style="position:absolute;left:1022px;top:375.3px;width:14px;height:14.5px;background:#fff;border:1px solid #8c8f94;border-radius:3.5px;box-shadow:inset 0 1px 2px rgba(0,0,0,.1)"></div>
<div class="t" style="left:1044px;top:377px;font-size:11.29px;line-height:15px;letter-spacing:0.19px;color:#3c434a;">Display as dropdown</div>
<div style="position:absolute;left:1022px;top:394.25px;width:14px;height:14.5px;background:#fff;border:1px solid #8c8f94;border-radius:3.5px;box-shadow:inset 0 1px 2px rgba(0,0,0,.1)"></div>
<svg style="position:absolute;left:1019.7px;top:392.42px" width="17.7" height="17.7" viewBox="0 0 20 20"><path d="M14.830 4.890l1.340.94-5.810 8.380H9.020L5.780 9.670l1.340-1.250 2.570 2.400z" fill="#3582c4"/></svg>
<div class="t" style="left:1044px;top:395px;font-size:11.29px;line-height:15px;letter-spacing:0.14px;color:#3c434a;">Show post counts</div>
<div style="position:absolute;left:1022px;top:413.25px;width:14px;height:14.5px;background:#fff;border:1px solid #8c8f94;border-radius:3.5px;box-shadow:inset 0 1px 2px rgba(0,0,0,.1)"></div>
<svg style="position:absolute;left:1019.7px;top:411.42px" width="17.7" height="17.7" viewBox="0 0 20 20"><path d="M14.830 4.890l1.340.94-5.810 8.380H9.020L5.780 9.670l1.340-1.250 2.570 2.400z" fill="#3582c4"/></svg>
<div class="t" style="left:1044px;top:414px;font-size:11.29px;line-height:15px;letter-spacing:0.06px;color:#3c434a;">Show hierarchy</div>
<a class="t" style="left:1022.5px;top:442px;font-size:11.29px;line-height:15px;letter-spacing:0.09px;color:#c9302f;text-decoration:underline;">Delete</a>
<div class="t" style="left:1058.5px;top:442px;font-size:11.29px;line-height:15px;color:#3c434a;">|</div>
<a class="t" style="left:1065px;top:442px;font-size:11.29px;line-height:15px;letter-spacing:0.29px;color:#2271b1;text-decoration:underline;">Done</a>
<div style="position:absolute;left:1258.5px;top:440px;width:49.5px;height:26.5px;background:#f6f7f7;border:1px solid #dcdcde;border-radius:3px"></div>
<div class="t" style="left:1267.7px;top:447px;font-size:11.29px;line-height:15px;letter-spacing:-0.18px;color:#a7aaad;">Saved</div>
<div style="position:absolute;left:1007px;top:490px;width:316px;height:40px;background:#f6f7f7;border:1px solid #c3c4c7;box-shadow:0 1px 1px rgba(0,0,0,.04)"></div>
<h3 class="t" style="left:1022.2px;top:503px;font-size:11.29px;line-height:15px;letter-spacing:0.3px;color:#1d2327;-webkit-text-stroke:.3px #1d2327;font-weight:400;">Gallery:</h3>
<div class="t" style="left:1065.8px;top:503px;font-size:11.29px;line-height:15px;letter-spacing:-.15px;transform:scaleX(0.929);transform-origin:0 0;color:#3c434a;">GALLERY</div>
<svg style="position:absolute;left:1299px;top:507.5px" width="8" height="5.5" viewBox="0 0 10 6" preserveAspectRatio="none"><path d="M0 6h10L5 0z" fill="#787c82"/></svg>
<div style="position:absolute;left:1007px;top:530px;width:316px;height:259px;background:#fff;border:1px solid #c3c4c7;border-top:none"></div>
<div class="t" style="left:1022.5px;top:546px;font-size:11.29px;line-height:15px;letter-spacing:0.13px;color:#3c434a;">Title:</div>
<div style="position:absolute;left:1022px;top:562px;width:286px;height:26.5px;background:#fff;border:1px solid #8c8f94;border-radius:3.500px"></div>
<div class="t" style="left:1030.8px;top:568px;font-size:12.16px;line-height:16px;letter-spacing:-.15px;transform:scaleX(0.906);transform-origin:0 0;color:#2c3338;">GALLERY</div>
<svg style="position:absolute;left:1021px;top:600px" width="90" height="60" viewBox="0 0 90 60">
<defs>
<radialGradient id="sky" cx="60%" cy="62%" r="85%"><stop offset="0" stop-color="#fffefb"/><stop offset=".42" stop-color="#f3f6f8"/><stop offset=".66" stop-color="#d0e0ec"/><stop offset=".86" stop-color="#94b8d6"/><stop offset="1" stop-color="#5c90c1"/></radialGradient>
<radialGradient id="crn" cx="0" cy="0" r="38%"><stop offset="0" stop-color="#173f8f" stop-opacity=".9"/><stop offset="1" stop-color="#2a60a5" stop-opacity="0"/></radialGradient>
<radialGradient id="crn2" cx="100%" cy="0" r="30%"><stop offset="0" stop-color="#1d4b8f" stop-opacity=".8"/><stop offset="1" stop-color="#2a60a5" stop-opacity="0"/></radialGradient>
<radialGradient id="sun" cx="50%" cy="50%" r="50%"><stop offset="0" stop-color="#fff6ea" stop-opacity=".95"/><stop offset=".6" stop-color="#f6dccb" stop-opacity=".6"/><stop offset="1" stop-color="#f3d6c4" stop-opacity="0"/></radialGradient>
<filter id="b1" x="-20%" y="-20%" width="140%" height="140%"><feGaussianBlur stdDeviation=".8"/></filter>
<filter id="b2" x="-20%" y="-20%" width="140%" height="140%"><feGaussianBlur stdDeviation=".4"/></filter>
<clipPath id="c1"><rect width="90" height="60"/></clipPath>
</defs>
<g clip-path="url(#c1)">
<rect width="90" height="60" fill="url(#sky)"/>
<rect width="90" height="60" fill="url(#crn)"/>
<rect width="90" height="60" fill="url(#crn2)"/>
<path d="M0 23.500L27 26" stroke="#9dbad2" stroke-width=".5"/>
<g filter="url(#b1)">
<path d="M18 1l4-2h11l1 4-3 4-1 5-2 4-1-5-3-1-2 3-1-5-4-2z" fill="#3a4f66" opacity=".8"/>
<path d="M-2 62V51l5-2 5 1 4-3 4 4 6 2 8-2 8 2 9 0 7-3 6-2 5 2 4-2 2-6 4-3 5-1 4-3 6 0v27z" fill="#1e2d39"/>
<path d="M55 57l4-5 7-1 6 3-1 6H56z" fill="#8598aa" opacity=".7"/>
<ellipse cx="46" cy="51" rx="10" ry="7" fill="url(#sun)"/>
</g>
<g filter="url(#b2)">
<path d="M9 61l7-9 5-8 .500-9.500 2.500-.5 2.500 8 4-2.500 5 .500 4.500 3-3 3.500-5 4.500-5 10z" fill="#d3a687"/>
<path d="M9 61l7-9 4-6 3.500 8-6 7z" fill="#6f5c4c"/>
<path d="M25 27l1.500 5 13.500 5.700 12 1.300 3.500-2.200-13-3.800-12-6z" fill="#ece4d8"/>
<path d="M29.500 19.500l-2.500 8 14 6.200 14 3-1-3.700-9-6.500-5-5-6-1.500z" fill="#f03b2a"/>
<path d="M32.500 20.500l6.500-1.500 5 3-4 2.500 7.500 6-9 .800-8.500-4z" fill="#222833"/>
<path d="M27.500 15l3 4.500" stroke="#2b3340" stroke-width=".7"/>
<path d="M46 30.500l8 3 1 3.200-8-2z" fill="#a81f27"/>
</g>
</g></svg>
<svg style="position:absolute;left:1120px;top:600px" width="90" height="90" viewBox="0 0 90 90">
<defs>
<linearGradient id="ct" x1="0" y1="1" x2="1" y2="0"><stop offset="0" stop-color="#46566e"/><stop offset=".55" stop-color="#3c4c64"/><stop offset="1" stop-color="#2c3a52"/></linearGradient>
<radialGradient id="ball" cx="40%" cy="35%" r="70%"><stop offset="0" stop-color="#c0503c"/><stop offset=".7" stop-color="#9a3226"/><stop offset="1" stop-color="#6d2018"/></radialGradient>
<filter id="b3" x="-20%" y="-20%" width="140%" height="140%"><feGaussianBlur stdDeviation=".45"/></filter>
<clipPath id="c2"><rect width="90" height="90"/></clipPath>
</defs>
<g clip-path="url(#c2)">
<rect width="90" height="90" fill="url(#ct)"/>
<g filter="url(#b3)">
<path d="M4.500-.500L77 60.500" stroke="#eceee9" stroke-width="2.600" fill="none"/>
<path d="M76.500 60L91 40" stroke="#eceee9" stroke-width="2.600" fill="none"/>
<path d="M13 66c12-3 24-8 33-17" stroke="#eceee9" stroke-width="2.400" fill="none"/>
<path d="M31 71c0-6 4-10 9-10h10c6 0 9 4 9 10z" fill="#1b222d"/>
<path d="M36 64l3-2 2 6-4 1zM52 63l3-1 1 6-3 1z" fill="#aeb6c6"/>
<path d="M16 91l10-15 7-6h23l8 9 8 12z" fill="#b9bedc"/>
<path d="M-1 49c12-5 28-8 43-9v11c-10 1-22 3-30 7 3 9 0 22-3 33H-1z" fill="#e9c6b2"/>
<path d="M-1 58c3 8 2 20 0 33z" fill="#d2a48e"/>
<path d="M48 38.500c4-2 12-2 15 1 2 3 1.500 11-1 15.500-2 2.500-5 3-6 1-3-1-7-3-8-5z" fill="#ecccb9"/>
<path d="M42.500 39l4-.5 1.500 12-4 .5z" fill="#1d222b"/>
<circle cx="45" cy="43.700" r="4" fill="#232a35"/><circle cx="45" cy="43.700" r="2.800" fill="#56657a"/>
<path d="M84 68l7-2v25h-7c2-8 2-16 0-23z" fill="#e2b9a3"/>
<circle cx="74.600" cy="73.700" r="12.700" fill="url(#ball)"/>
<path d="M66 64.500c4 6 5 14 3 21M74 61c4 7 5 17 2 25.500M82 63.500c3 6 3 13 1 19" stroke="#5b1a14" stroke-width=".7" fill="none"/>
</g>
</g></svg>
<svg style="position:absolute;left:1219px;top:600px" width="90" height="76.500" viewBox="0 0 90 76.500">
<defs>
<linearGradient id="wall" x1="0" y1="0" x2="0" y2="1"><stop offset="0" stop-color="#56b7d6"/><stop offset=".45" stop-color="#6cc2dc"/><stop offset="1" stop-color="#8fd0e2"/></linearGradient>
<filter id="b4" x="-20%" y="-20%" width="140%" height="140%"><feGaussianBlur stdDeviation=".5"/></filter>
<filter id="b5" x="-20%" y="-20%" width="140%" height="140%"><feGaussianBlur stdDeviation="1.600"/></filter>
<clipPath id="c3"><rect width="90" height="76.500"/></clipPath>
</defs>
<g clip-path="url(#c3)">
<rect width="90" height="76.500" fill="url(#wall)"/>
<g filter="url(#b5)" fill="#e4f2f6" opacity=".75">
<ellipse cx="74" cy="44" rx="7" ry="9"/><ellipse cx="14" cy="66" rx="10" ry="6"/><ellipse cx="78" cy="68" rx="9" ry="6"/><ellipse cx="5" cy="45" rx="4" ry="8"/><ellipse cx="27" cy="64" rx="4" ry="7"/><ellipse cx="64" cy="66" rx="4" ry="6"/><ellipse cx="73" cy="24" rx="1.500" ry="6"/>
</g>
<g filter="url(#b4)">
<path d="M0 16h90M0 31h90M0 46h90M0 61h90M23 0v16M57 0v16M12 16v15M45 16v15M80 16v15M23 31v15M57 31v15M12 46v15M80 46v15M23 61v16M57 61v16" stroke="#3d9dbd" stroke-width=".9" opacity=".7" fill="none"/>
<path d="M34 68h25v9H34z" fill="#4b5359"/>
<path d="M32 31c4-2 9-3 13-3s9 1 15 3c3 2 5 8 6 14l1 8c0 4-3 7-6 8l-2 2v6H34V57l-2 4c-3 1-6-2-6.500-6l1-9c1-6 2.500-12 5.500-15z" fill="#c60f1e"/>
<path d="M34 45l1 12M59 42l-1 14" stroke="#8f0a15" stroke-width=".8" fill="none"/>
<path d="M41 24h8v6c-2 2-6 2-8 0z" fill="#d6a58e"/>
<ellipse cx="44.800" cy="18" rx="6" ry="7.600" fill="#dcae97"/>
<path d="M38.600 16c0-5 3-7.500 6.200-7.500s6.200 2.500 6.200 7.500c-1-3-3-4-6.200-4s-5.200 1-6.200 4z" fill="#6a5446"/>
<path d="M39 19c1 5 3 7 5.800 7s4.800-2 5.800-7c-1 3-3 4-5.800 4s-4.800-1-5.800-4z" fill="#8a5f48"/>
<path d="M42 20.500c2 1 4 1 6 0-1 1.600-5 1.600-6 0z" fill="#fff"/>
<circle cx="30.800" cy="43.500" r="3.600" fill="#e6c3ae"/><circle cx="59.800" cy="39.500" r="3.600" fill="#e6c3ae"/>
</g>
</g></svg>
<div style="position:absolute;left:1022px;top:700px;width:78px;height:26.5px;background:#f6f7f7;border:1px solid #2271b1;border-radius:3px"></div>
<div class="t" style="left:1032.7px;top:707px;font-size:11.29px;line-height:15px;letter-spacing:-0.03px;color:#2271b1;">Edit Gallery</div>
<a class="t" style="left:1022.5px;top:740px;font-size:11.29px;line-height:15px;letter-spacing:0.09px;color:#c9302f;text-decoration:underline;">Delete</a>
<div class="t" style="left:1058.5px;top:740px;font-size:11.29px;line-height:15px;color:#3c434a;">|</div>
<a class="t" style="left:1065px;top:740px;font-size:11.29px;line-height:15px;letter-spacing:0.29px;color:#2271b1;text-decoration:underline;">Done</a>
<div style="position:absolute;left:1258.5px;top:738.4px;width:49.5px;height:26.5px;background:#f6f7f7;border:1px solid #dcdcde;border-radius:3px"></div>
<div class="t" style="left:1267.7px;top:745px;font-size:11.29px;line-height:15px;letter-spacing:-0.18px;color:#a7aaad;">Saved</div>
<div style="position:absolute;left:999px;top:192px;width:331.5px;height:577px;border:4px solid #ff0000;border-radius:2px;z-index:9"></div>
</body>
</html>
